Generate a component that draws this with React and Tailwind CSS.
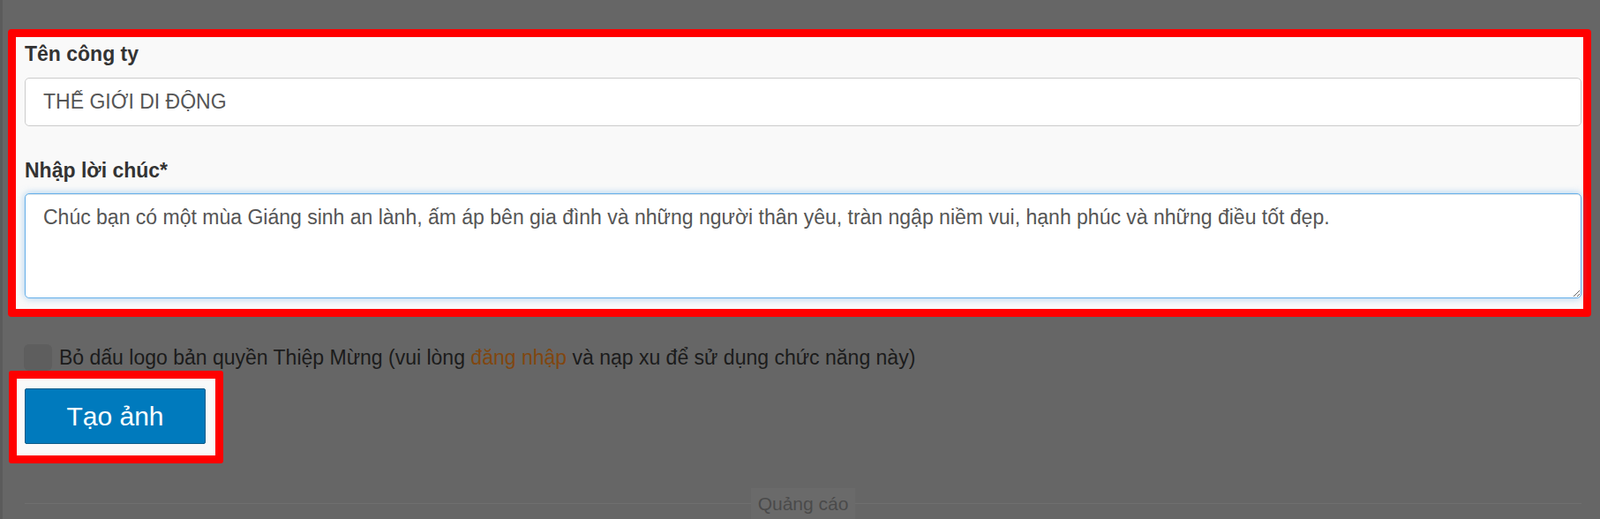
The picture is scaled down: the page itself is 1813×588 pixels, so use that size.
import React from "react";

const App = () => {
  return (
    <div className="min-h-screen overflow-hidden border-l-[3px] border-[#5b5b5b] bg-[#666666] pl-[6px] pt-[33px] font-['Liberation_Sans',Arial,sans-serif]">
      {/* highlighted form block */}
      <div className="h-[326px] w-[1794px] rounded-[4px] border-[9px] border-[#ff0000] bg-[#f9f9f9] pl-[10px] pr-[2px] pt-[5px]">
        <label className="block text-[23px] font-bold leading-[28px] text-[#333333]">Tên công ty</label>
        <input
          type="text"
          defaultValue="THẾ GIỚI DI ĐỘNG"
          className="mt-[13px] block h-[55px] w-full rounded-[5px] border border-[#cccccc] bg-white px-[20px] text-[23px] text-[#555555] outline-none"
        />
        <label className="mt-[36px] block text-[23px] font-bold leading-[28px] text-[#333333]">Nhập lời chúc*</label>
        <textarea
          defaultValue="Chúc bạn có một mùa Giáng sinh an lành, ấm áp bên gia đình và những người thân yêu, tràn ngập niềm vui, hạnh phúc và những điều tốt đẹp."
          className="mt-[12px] block h-[119px] w-full rounded-[5px] border border-[#66afe9] bg-white px-[20px] pt-[10px] text-[23px] leading-[33px] text-[#555555] shadow-[inset_0_1px_1px_rgba(0,0,0,0.075),0_0_8px_rgba(102,175,233,0.6)] outline-none"
        />
      </div>

      <div className="ml-[18px] mt-[31px] flex items-start gap-[8px]">
        <span className="h-[30px] w-[32px] rounded-[6px] bg-[#5e5e5e]" />
        <span className="mt-px text-[23px] leading-[28px] text-[#1b1b1b]">
          Bỏ dấu logo bản quyền Thiệp Mừng (vui lòng <span className="text-[#81460f]">đăng nhập</span> và nạp xu để sử dụng chức năng này)
        </span>
      </div>

      <div className="ml-px h-[105px] w-[243px] rounded-[3px] border-[9px] border-[#ff0000] bg-[#f9f9f9] pl-[9px] pt-[11px]">
        <button
          type="button"
          className="flex h-[63px] w-[205px] items-center justify-center rounded-[2px] border border-[#0b5b88] bg-[#007abd] text-[30px] text-white"
        >
          Tạo ảnh
        </button>
      </div>

      <div className="ml-[19px] mt-[28px] flex h-[35px] w-[1764px] items-center">
        <div className="h-px flex-1 bg-[#6f6f6f]" />
        <div className="flex h-[35px] items-center bg-[#6a6a6a] px-[8px] text-[21px] text-[#4a4a4a]">Quảng cáo</div>
        <div className="h-px flex-1 bg-[#6f6f6f]" />
      </div>
    </div>
  );
};

export default App;
